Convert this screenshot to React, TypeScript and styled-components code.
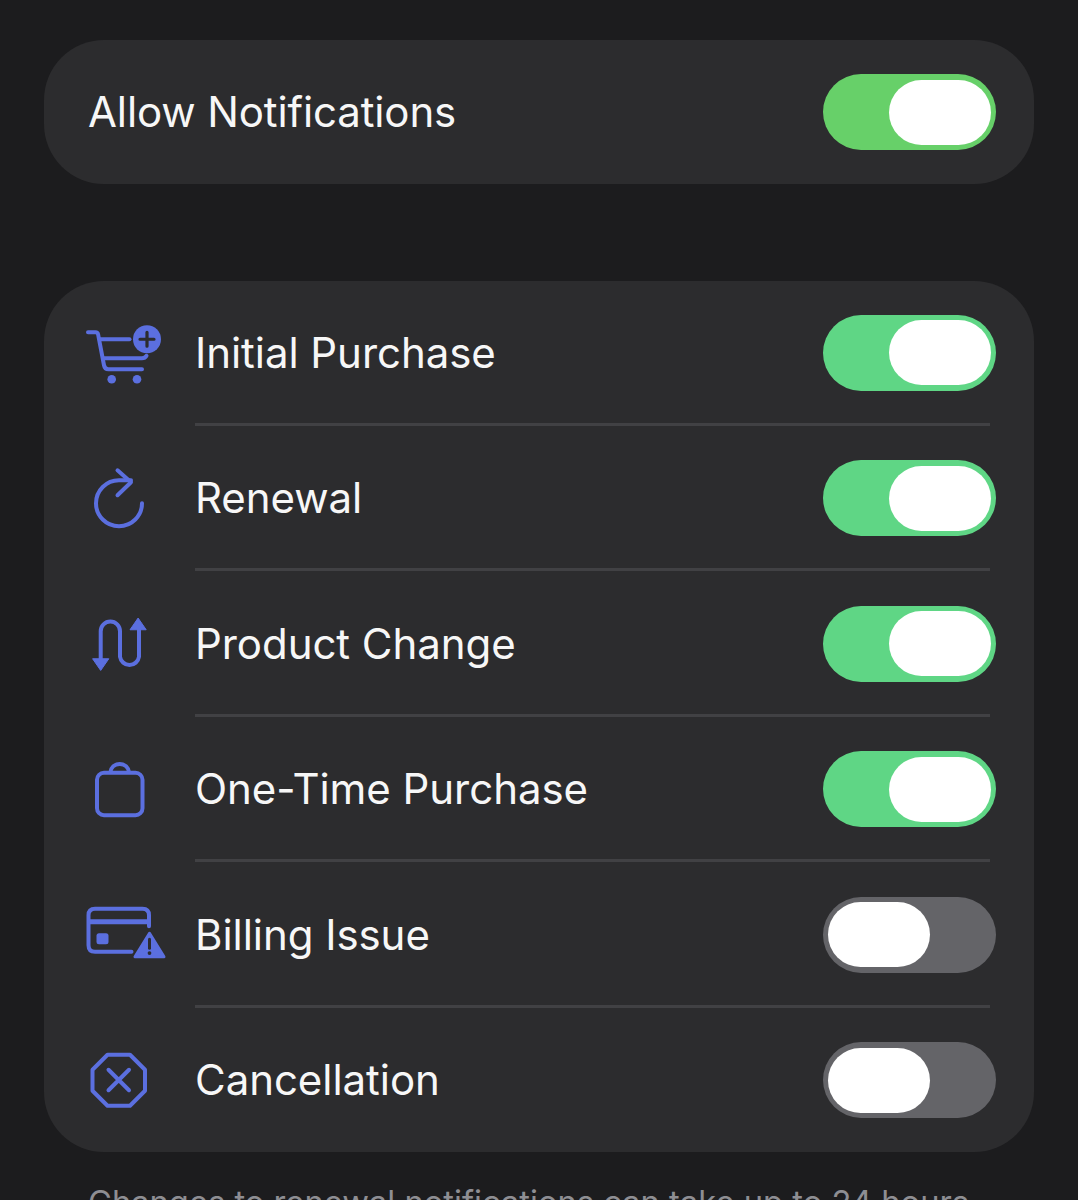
import React from "react";
import styled, { createGlobalStyle } from "styled-components";

const Global = createGlobalStyle`
  html, body { margin: 0; padding: 0; background: #1c1c1e; }
  body { font-family: Inter, "Liberation Sans", sans-serif; }
`;

const Page = styled.main`
  height: 1200px;
  overflow: hidden;
  box-sizing: border-box;
  padding: 40px 44px 0;
  background: #1c1c1e;
`;

const Card = styled.section<{ $mb: number }>`
  background: #2c2c2e;
  border-radius: 60px;
  margin-bottom: ${(p) => p.$mb}px;
`;

const Row = styled.div<{ $h: number; $pl: number }>`
  height: ${(p) => p.$h}px;
  box-sizing: border-box;
  padding: 0 38px 0 ${(p) => p.$pl}px;
  display: flex;
  align-items: center;
`;

const IconSlot = styled.svg.attrs({ fill: "none", xmlns: "http://www.w3.org/2000/svg" })`
  width: 84px;
  height: 84px;
  flex: none;
  margin-right: 27px;
  color: #5b6fdf;
`;

const Label = styled.span<{ $spacing?: number }>`
  flex: 1;
  color: #f7f7f7;
  font-size: 42px;
  font-weight: 400;
  letter-spacing: ${(p) => p.$spacing ?? -0.05}px;
  line-height: 50px;
  white-space: nowrap;
`;

const Separator = styled.div`
  height: 3px;
  margin: -2px 44px 1px 151px;
  background: #414144;
`;

const Track = styled.div<{ $on: boolean; $color: string }>`
  width: 173px;
  height: 76px;
  flex: none;
  box-sizing: border-box;
  border-radius: 38px;
  padding: 0 5px;
  display: flex;
  align-items: center;
  justify-content: ${(p) => (p.$on ? "flex-end" : "flex-start")};
  background: ${(p) => p.$color};
`;

const Knob = styled.div`
  width: 102px;
  height: 65px;
  border-radius: 33px;
  background: #fff;
`;

const Footnote = styled.p`
  margin: -2px 0 0;
  padding-left: 44px;
  color: #8e8e93;
  font-size: 32.7px;
  line-height: 41px;
  white-space: nowrap;
`;

const Toggle = ({ on, color }: { on: boolean; color?: string }) => (
  <Track $on={on} $color={on ? color ?? "#5fd685" : "#646468"}>
    <Knob />
  </Track>
);

const Cart = () => (
  <IconSlot viewBox="84 310.750 84 84">
    <g stroke="currentColor" strokeWidth="4" strokeLinecap="round" strokeLinejoin="round">
      <path d="M88 332h7.500c1.600 0 2.300.8 2.600 2.200L104 365c.5 2.600 1.800 4 4.400 4H142" />
      <path d="M100 339h29.500" />
      <path d="M103 358h39c2 0 3.500-.7 4.500-2.500" />
    </g>
    <circle cx="147" cy="339" r="14" fill="currentColor" />
    <path d="M147 332v14M140 339h14" stroke="#2c2c2e" strokeWidth="3.200" strokeLinecap="round" />
    <circle cx="111.700" cy="379" r="4.300" fill="currentColor" />
    <circle cx="137" cy="379" r="4.300" fill="currentColor" />
  </IconSlot>
);

const Renewal = () => (
  <IconSlot viewBox="84 456.250 84 84">
    <g stroke="currentColor" strokeWidth="4" strokeLinecap="round" strokeLinejoin="round">
      <path d="M142 503.500a23 23 0 1 1-23-23h12" />
      <path d="M117.500 470.500L131 482.500L117.500 495.500" />
    </g>
  </IconSlot>
);

const Change = () => (
  <IconSlot viewBox="84 601.750 84 84">
    <path
      d="M100.700 660V631a9.600 9.600 0 0 1 19.300 0v25.500a9.600 9.600 0 0 0 19 0V628"
      stroke="currentColor"
      strokeWidth="4"
      strokeLinecap="round"
    />
    <path d="M92.600 658.500h16.200l-8.100 11.700z" fill="currentColor" stroke="currentColor" strokeWidth="1" strokeLinejoin="round" />
    <path d="M130 629.500h16.200l-8.100-11.700z" fill="currentColor" stroke="currentColor" strokeWidth="1" strokeLinejoin="round" />
  </IconSlot>
);

const Bag = () => (
  <IconSlot viewBox="84 747.250 84 84">
    <g stroke="currentColor" strokeWidth="4">
      <rect x="97" y="773" width="45.500" height="42.500" rx="7" />
      <path d="M110.300 773c.6-5.600 4.400-8.700 9.400-8.700s8.800 3.100 9.400 8.700" />
    </g>
  </IconSlot>
);

const CardAlert = () => (
  <IconSlot viewBox="84 892.750 84 84">
    <path
      d="M131.500 951.500H95c-4.600 0-6.500-2-6.500-6.500v-30c0-4.500 1.900-6.500 6.500-6.500h47.500c4.600 0 6.500 2 6.500 6.500v11"
      stroke="currentColor"
      strokeWidth="4"
      strokeLinecap="round"
    />
    <path d="M88.500 921.500H149" stroke="currentColor" strokeWidth="5" />
    <rect x="96.500" y="933" width="12" height="11" rx="2.500" fill="currentColor" />
    <path d="M149.500 933L164 956.500H135z" fill="currentColor" stroke="currentColor" strokeWidth="3" strokeLinejoin="round" />
    <path d="M149.500 939v9" stroke="#2c2c2e" strokeWidth="3" strokeLinecap="round" />
    <circle cx="149.500" cy="952.800" r="1.900" fill="#2c2c2e" />
  </IconSlot>
);

const Cancel = () => (
  <IconSlot viewBox="84 1038.250 84 84">
    <g stroke="currentColor" strokeWidth="4" strokeLinecap="round" strokeLinejoin="round">
      <path d="M107.500 1055h22.500l15 15v21l-15 15h-22.500l-15-15v-21z" />
      <path d="M108.500 1070l20.500 20.500M129 1070l-20.500 20.500" />
    </g>
  </IconSlot>
);

const items = [
  { label: "Initial Purchase", icon: <Cart />, on: true },
  { label: "Renewal", icon: <Renewal />, on: true },
  { label: "Product Change", icon: <Change />, on: true },
  { label: "One-Time Purchase", icon: <Bag />, on: true },
  { label: "Billing Issue", icon: <CardAlert />, on: false },
  { label: "Cancellation", icon: <Cancel />, on: false },
];

export default function App() {
  return (
    <Page>
      <Global />
      <Card $mb={97}>
        <Row $h={144} $pl={44}>
          <Label $spacing={-0.12}>Allow Notifications</Label>
          <Toggle on color="#67d069" />
        </Row>
      </Card>
      <Card $mb={32}>
        {items.map((item, i) => (
          <React.Fragment key={item.label}>
            {i > 0 && <Separator />}
            <Row $h={143.500} $pl={40}>
              {item.icon}
              <Label>{item.label}</Label>
              <Toggle on={item.on} />
            </Row>
          </React.Fragment>
        ))}
      </Card>
      <Footnote>Changes to renewal notifications can take up to 24 hours</Footnote>
    </Page>
  );
}
